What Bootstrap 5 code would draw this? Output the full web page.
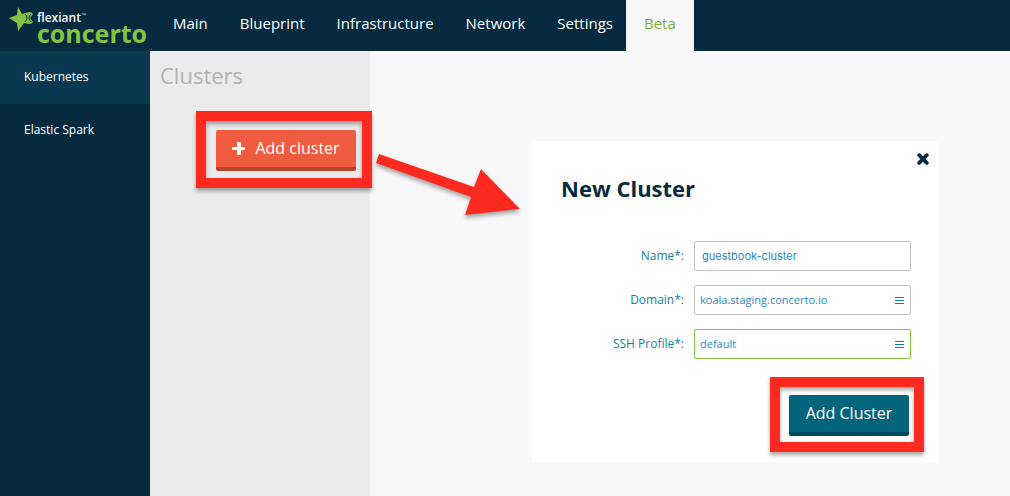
<!DOCTYPE html>
<html lang="en">
<head>
<meta charset="utf-8">
<meta name="viewport" content="width=device-width, initial-scale=1">
<title>Flexiant Concerto – Clusters</title>
<link rel="stylesheet" href="https://cdn.jsdelivr.net/npm/bootstrap@5.3.0/dist/css/bootstrap.min.css">
<style>
  body { font-family: "Open Sans", "Noto Sans", sans-serif; background: #f8f8f8; color: #062b40; }
  .topbar { background: #062b40; min-height: 51px; }
  .brand { width: 157px; padding: 7px 0 0 9px; text-decoration: none; }
  .brand-star { width: 25px; height: 25px; flex: none; }
  .brand-words { margin-left: 3px; padding-top: 3px; }
  .brand-top { display: flex; gap: 1px; font-size: 12px; font-weight: 600; line-height: 16px; color: #fff; }
  .brand-tm { font-size: 5px; line-height: 10px; }
  .brand-main { font-size: 25px; font-weight: 700; line-height: 15px; color: #82c341; }
  .topbar .nav-link { color: #fff; font-size: 15px; line-height: 22px; padding: 12px 16px 17px; }
  .topbar .nav-link.active { background: #f8f8f8; color: #7cb035; padding-left: 18px; padding-right: 18px; margin-left: -3px; }
  .side { width: 150px; background: #062b40; }
  .side .nav-link { color: #fff; font-size: 12px; font-weight: 500; line-height: 18px; padding: 17px 24px 18px; }
  .side .nav-link.active { background: #0a3851; }
  .clusters { width: 220px; background: #ebebeb; }
  .clusters h1 { font-size: 22px; line-height: 30px; color: #b2b2b2; padding: 9px 10px 0; margin: 0 0 21px; font-weight: 400; }
  .callout { position: relative; border: 10px solid #ff2a1f; width: max-content; box-shadow: 0 3px 4px rgba(0,0,0,.35), inset 0 3px 4px rgba(0,0,0,.35); }
  .callout-side { margin-left: 46px; padding: 9px 6px 7px 10px; }
  .callout-form { padding: 8px 5px 6px 9px; margin-top: 18px; }
  .arrow { position: absolute; left: 100%; top: 20px; margin-left: 10px; width: 160px; height: 90px; filter: drop-shadow(0 3px 2px rgba(0,0,0,.35)); z-index: 2; }
  .action { border: 0; border-bottom: 4px solid; border-radius: 2px; color: #fff; font-size: 16px; line-height: 22px; padding: 7px 0 8px; }
  .action:hover { color: #fff; }
  .action-add { width: 140px; background: #ef5b3e; border-color: #b9442f; }
  .action-save { width: 120px; background: #03657c; border-color: #024a5c; }
  .content-area { padding: 90px 20px 0 162px; min-width: 0; }
  .panel { max-width: 407px; background: #fff; padding: 9px 15px 11px 29px; }
  .close-x { border: 0; background: none; padding: 0; width: 14px; height: 18px; margin-right: -6px; line-height: 0; }
  .panel h2 { font-size: 22px; line-height: 30px; font-weight: 700; margin: 5px 0 38px; }
  .fields { padding-right: 13px; display: grid; gap: 14px; }
  .field { display: grid; grid-template-columns: minmax(0, 1fr) 217px; column-gap: 10px; align-items: center; }
  .field label { font-size: 12px; line-height: 18px; color: #16809a; text-align: right; }
  .field .form-control { height: 30px; border: 1px solid #c1c1c1; border-radius: 2px; padding: 0 24px 0 5px; font-size: 11px; line-height: 18px; color: #1f88c2; background: #fff; }
  .field .form-control.name-box { font-family: Inter, Roboto, sans-serif; font-size: 11px; padding-left: 7px; }
  .field .form-control.valid { border-color: #82c341; }
  .bars { position: absolute; right: 7px; top: 12px; pointer-events: none; }
</style>
<script src="https://cdn.jsdelivr.net/npm/bootstrap@5.3.0/dist/js/bootstrap.bundle.min.js"></script>
</head>
<body class="d-flex flex-column min-vh-100">
<header class="topbar d-flex">
  <a class="brand d-flex" href="#">
    <svg class="brand-star" viewBox="0 0 25 25" aria-hidden="true">
      <path fill="#82c341" d="M9 0 13 7 20 5Q23 5 24 7L21 11 24 15Q23 17 20 17L15 16 9 24 8 16 0 11 8 8Z"/>
      <path fill="none" stroke="#062b40" stroke-width="1" d="M16 7Q20 11 16 15M22 7Q18 11 22 15"/>
    </svg>
    <span class="brand-words d-flex flex-column">
      <span class="brand-top">flexiant<span class="brand-tm">™</span></span>
      <span class="brand-main">concerto</span>
    </span>
  </a>
  <nav class="nav" aria-label="Main">
    <a class="nav-link" href="#">Main</a>
    <a class="nav-link" href="#">Blueprint</a>
    <a class="nav-link" href="#">Infrastructure</a>
    <a class="nav-link" href="#">Network</a>
    <a class="nav-link" href="#">Settings</a>
    <a class="nav-link active" aria-current="page" href="#">Beta</a>
  </nav>
</header>
<div class="d-flex flex-grow-1">
  <nav class="side nav flex-column flex-nowrap flex-shrink-0" aria-label="Beta">
    <a class="nav-link active" href="#">Kubernetes</a>
    <a class="nav-link" href="#">Elastic Spark</a>
  </nav>
  <aside class="clusters flex-shrink-0">
    <h1>Clusters</h1>
    <div class="callout callout-side">
      <button type="button" class="btn action action-add d-flex align-items-center justify-content-center">
        <svg class="me-2" width="15" height="13" viewBox="0 0 15 13" aria-hidden="true"><path fill="#fff" d="M5 0h3q1 0 1 1v4h3q1 0 1 1v1q0 1-1 1H9v4q0 1-1 1H6q-1 0-1-1V8H1Q0 8 0 7V6q0-1 1-1h4z"/></svg>
        Add cluster
      </button>
      <svg class="arrow" viewBox="0 0 160 90" aria-hidden="true"><path fill="#ff2a1f" d="M7 13 102 46 109 28 148 68 93 74 99 56 4 22Z"/></svg>
    </div>
  </aside>
  <main class="content-area flex-grow-1">
    <section class="panel" aria-labelledby="panel-title">
      <div class="d-flex justify-content-end">
        <button type="button" class="close-x" aria-label="Close">
          <svg width="12" height="12" viewBox="0 0 12 12"><path stroke="#062b40" stroke-width="3.8" stroke-linecap="round" d="M2.2 2.2 9.8 9.8M9.8 2.2 2.2 9.8"/></svg>
        </button>
      </div>
      <h2 id="panel-title">New Cluster</h2>
      <form>
        <div class="fields">
          <div class="field">
            <label for="name">Name*:</label>
            <input class="form-control name-box" id="name" type="text" value="guestbook-cluster">
          </div>
          <div class="field">
            <label for="domain">Domain*:</label>
            <div class="position-relative">
              <select class="form-control" id="domain"><option>koala.staging.concerto.io</option></select>
              <svg class="bars" width="9" height="8" viewBox="0 0 9 8" aria-hidden="true"><path fill="#0d7bbd" d="M0 0h9v1H0zM0 3h9v1H0zM0 6h9v1H0z"/></svg>
            </div>
          </div>
          <div class="field">
            <label for="ssh">SSH Profile*:</label>
            <div class="position-relative">
              <select class="form-control valid" id="ssh"><option>default</option></select>
              <svg class="bars" width="9" height="8" viewBox="0 0 9 8" aria-hidden="true"><path fill="#0d7bbd" d="M0 0h9v1H0zM0 3h9v1H0zM0 6h9v1H0z"/></svg>
            </div>
          </div>
        </div>
        <div class="callout callout-form ms-auto">
          <button type="button" class="btn action action-save">Add Cluster</button>
        </div>
      </form>
    </section>
  </main>
</div>
</body>
</html>
